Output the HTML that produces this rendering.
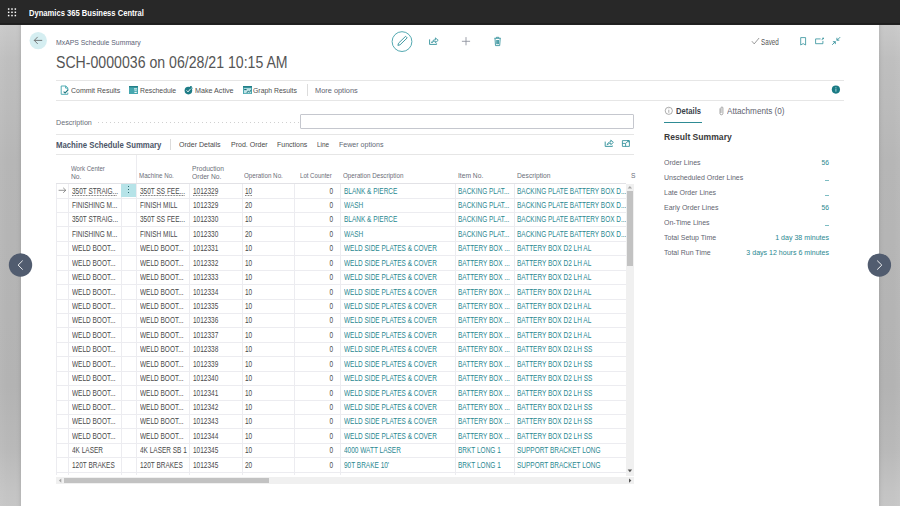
<!DOCTYPE html><html><head><meta charset="utf-8"><style>
*{margin:0;padding:0;box-sizing:border-box}
html,body{width:900px;height:506px;overflow:hidden;background:#fff;font-family:"Liberation Sans",sans-serif}
.a{position:absolute;white-space:nowrap}
.vl{background:#ececf0;width:1px}
</style></head><body><div class="a " style="left:0;top:0;width:900px;height:24.8px;background:linear-gradient(180deg,#282828 0,#282828 22.8px,#1e1e1e 23.4px,#1e1e1e 24.2px,#262626 24.8px)"></div>
<svg class="a" style="left:0;top:0" width="24" height="24" viewBox="0 0 24 24"><rect x="7.90" y="8.30" width="1.5" height="1.5" fill="#fff"/><rect x="7.90" y="11.55" width="1.5" height="1.5" fill="#fff"/><rect x="7.90" y="14.80" width="1.5" height="1.5" fill="#fff"/><rect x="11.25" y="8.30" width="1.5" height="1.5" fill="#fff"/><rect x="11.25" y="11.55" width="1.5" height="1.5" fill="#fff"/><rect x="11.25" y="14.80" width="1.5" height="1.5" fill="#fff"/><rect x="14.60" y="8.30" width="1.5" height="1.5" fill="#fff"/><rect x="14.60" y="11.55" width="1.5" height="1.5" fill="#fff"/><rect x="14.60" y="14.80" width="1.5" height="1.5" fill="#fff"/></svg>
<div class="a " style="left:29.30px;top:9.00px;font-size:8.52px;line-height:8.52px;color:#fff;transform:scaleX(0.892);transform-origin:0 0;font-weight:bold;">Dynamics 365 Business Central</div>
<div class="a " style="left:0;top:24.8px;width:21px;height:482px;background:linear-gradient(270deg,rgba(0,0,0,0.07) 0,rgba(0,0,0,0.05) 1px,rgba(0,0,0,0.01) 3px,rgba(0,0,0,0) 6px,rgba(255,255,255,0) 14px,rgba(255,255,255,0.05) 21px),linear-gradient(180deg,#c9c9c9 0%,#bfbfbf 7%,#b9b9b9 22%,#b6b6b6 28%,#b4b4b4 60%,#b3b3b3 75%,#b9b9b9 88%,#c4c4c4 97%,#c6c6c6 100%)"></div>
<div class="a " style="left:879.4px;top:24.8px;width:20.6px;height:482px;background:linear-gradient(90deg,rgba(0,0,0,0.07) 0,rgba(0,0,0,0.05) 1px,rgba(0,0,0,0.01) 3px,rgba(0,0,0,0) 6px,rgba(255,255,255,0) 14px,rgba(255,255,255,0.05) 21px),linear-gradient(180deg,#c9c9c9 0%,#bfbfbf 7%,#b9b9b9 22%,#b6b6b6 28%,#b4b4b4 60%,#b3b3b3 75%,#b9b9b9 88%,#c4c4c4 97%,#c6c6c6 100%)"></div>
<div class="a " style="left:55.60px;top:39.00px;font-size:7.40px;line-height:7.40px;color:#5a6376;transform:scaleX(0.928);transform-origin:0 0;">MxAPS Schedule Summary</div>
<div class="a " style="left:56.30px;top:54.00px;font-size:16.06px;line-height:16.06px;color:#555555;transform:scaleX(0.880);transform-origin:0 0;">SCH-0000036 on 06/28/21 10:15 AM</div>
<div class="a " style="left:760.80px;top:39.00px;font-size:8.24px;line-height:8.24px;color:#555555;transform:scaleX(0.762);transform-origin:0 0;">Saved</div>
<div class="a " style="left:56px;top:80px;width:787.5px;height:1px;background:#e6e6e6"></div>
<div class="a " style="left:56px;top:99.5px;width:787.5px;height:1px;background:#e6e6e6"></div>
<div class="a " style="left:70.70px;top:87.00px;font-size:7.48px;line-height:7.48px;color:#4f4f4f;transform:scaleX(0.935);transform-origin:0 0;">Commit Results</div>
<div class="a " style="left:139.50px;top:87.00px;font-size:7.48px;line-height:7.48px;color:#4f4f4f;transform:scaleX(0.915);transform-origin:0 0;">Reschedule</div>
<div class="a " style="left:195.00px;top:87.00px;font-size:7.48px;line-height:7.48px;color:#4f4f4f;transform:scaleX(0.958);transform-origin:0 0;">Make Active</div>
<div class="a " style="left:253.40px;top:87.00px;font-size:7.48px;line-height:7.48px;color:#4f4f4f;transform:scaleX(0.921);transform-origin:0 0;">Graph Results</div>
<div class="a " style="left:306.5px;top:84px;width:1px;height:12px;background:#dcdcdc"></div>
<div class="a " style="left:315.30px;top:87.00px;font-size:7.48px;line-height:7.48px;color:#5f6470;transform:scaleX(0.989);transform-origin:0 0;">More options</div>
<div class="a " style="left:55.80px;top:119.00px;font-size:7.40px;line-height:7.40px;color:#6a6e78;transform:scaleX(0.970);transform-origin:0 0;">Description</div>
<div class="a " style="left:97.5px;top:122px;width:202px;height:1px;background-image:linear-gradient(90deg,#d0d0d0 0,#d0d0d0 1px,transparent 1px);background-size:4px 1px"></div>
<div class="a " style="left:300.3px;top:114.3px;width:333.5px;height:14.8px;border:1px solid #c5c7ce;border-radius:1px"></div>
<div class="a " style="left:56px;top:133.7px;width:578px;height:1px;background:#e6e6e6"></div>
<div class="a " style="left:56px;top:153.8px;width:578px;height:1px;background:#e6e6e6"></div>
<div class="a " style="left:55.80px;top:141.00px;font-size:8.52px;line-height:8.52px;color:#4b5567;transform:scaleX(0.913);transform-origin:0 0;font-weight:bold;">Machine Schedule Summary</div>
<div class="a " style="left:170px;top:138.7px;width:1px;height:11px;background:#dcdcdc"></div>
<div class="a " style="left:179.40px;top:141.00px;font-size:7.68px;line-height:7.68px;color:#4a4a4a;transform:scaleX(0.919);transform-origin:0 0;">Order Details</div>
<div class="a " style="left:230.70px;top:141.00px;font-size:7.68px;line-height:7.68px;color:#4a4a4a;transform:scaleX(0.915);transform-origin:0 0;">Prod. Order</div>
<div class="a " style="left:276.70px;top:141.00px;font-size:7.68px;line-height:7.68px;color:#4a4a4a;transform:scaleX(0.910);transform-origin:0 0;">Functions</div>
<div class="a " style="left:316.80px;top:141.00px;font-size:7.68px;line-height:7.68px;color:#4a4a4a;transform:scaleX(0.840);transform-origin:0 0;">Line</div>
<div class="a " style="left:338.80px;top:141.00px;font-size:7.68px;line-height:7.68px;color:#636875;transform:scaleX(0.922);transform-origin:0 0;">Fewer options</div>
<div class="a " style="left:71.10px;top:165.00px;font-size:6.98px;line-height:6.98px;color:#6b6e78;transform:scaleX(0.868);transform-origin:0 0;">Work Center</div>
<div class="a " style="left:71.10px;top:173.00px;font-size:6.98px;line-height:6.98px;color:#6b6e78;transform:scaleX(0.960);transform-origin:0 0;">No.</div>
<div class="a " style="left:139.10px;top:172.00px;font-size:6.98px;line-height:6.98px;color:#6b6e78;transform:scaleX(0.890);transform-origin:0 0;">Machine No.</div>
<div class="a " style="left:191.90px;top:165.00px;font-size:6.98px;line-height:6.98px;color:#6b6e78;transform:scaleX(0.960);transform-origin:0 0;">Production</div>
<div class="a " style="left:191.90px;top:173.00px;font-size:6.98px;line-height:6.98px;color:#6b6e78;transform:scaleX(0.960);transform-origin:0 0;">Order No.</div>
<div class="a " style="left:244.40px;top:172.00px;font-size:6.98px;line-height:6.98px;color:#6b6e78;transform:scaleX(0.895);transform-origin:0 0;">Operation No.</div>
<div class="a " style="left:300.00px;top:172.00px;font-size:6.98px;line-height:6.98px;color:#6b6e78;transform:scaleX(0.871);transform-origin:0 0;">Lot Counter</div>
<div class="a " style="left:343.30px;top:172.00px;font-size:6.98px;line-height:6.98px;color:#6b6e78;transform:scaleX(0.896);transform-origin:0 0;">Operation Description</div>
<div class="a " style="left:457.80px;top:172.00px;font-size:6.98px;line-height:6.98px;color:#6b6e78;transform:scaleX(0.960);transform-origin:0 0;">Item No.</div>
<div class="a " style="left:516.90px;top:172.00px;font-size:6.98px;line-height:6.98px;color:#6b6e78;transform:scaleX(0.960);transform-origin:0 0;">Description</div>
<div class="a " style="left:630.80px;top:172.00px;font-size:6.98px;line-height:6.98px;color:#6b6e78;transform:scaleX(0.960);transform-origin:0 0;">S</div>
<div class="a vl" style="left:136.4px;top:154.8px;height:28.4px"></div>
<div class="a " style="left:56px;top:183px;width:570px;height:1px;background:#e2e2e6"></div>
<div class="a vl" style="left:56.0px;top:183.5px;height:291.8px"></div>
<div class="a vl" style="left:68.4px;top:183.5px;height:291.8px"></div>
<div class="a vl" style="left:120.6px;top:183.5px;height:291.8px"></div>
<div class="a vl" style="left:136.4px;top:183.5px;height:291.8px"></div>
<div class="a vl" style="left:189.0px;top:183.5px;height:291.8px"></div>
<div class="a vl" style="left:241.8px;top:183.5px;height:291.8px"></div>
<div class="a vl" style="left:294.4px;top:183.5px;height:291.8px"></div>
<div class="a vl" style="left:340.4px;top:183.5px;height:291.8px"></div>
<div class="a vl" style="left:454.7px;top:183.5px;height:291.8px"></div>
<div class="a vl" style="left:513.6px;top:183.5px;height:291.8px"></div>
<div class="a " style="left:56px;top:197.62px;width:570px;height:1px;background:#ececf0"></div>
<div class="a " style="left:56px;top:212.05px;width:570px;height:1px;background:#ececf0"></div>
<div class="a " style="left:56px;top:226.47px;width:570px;height:1px;background:#ececf0"></div>
<div class="a " style="left:56px;top:240.90px;width:570px;height:1px;background:#ececf0"></div>
<div class="a " style="left:56px;top:255.32px;width:570px;height:1px;background:#ececf0"></div>
<div class="a " style="left:56px;top:269.75px;width:570px;height:1px;background:#ececf0"></div>
<div class="a " style="left:56px;top:284.18px;width:570px;height:1px;background:#ececf0"></div>
<div class="a " style="left:56px;top:298.60px;width:570px;height:1px;background:#ececf0"></div>
<div class="a " style="left:56px;top:313.02px;width:570px;height:1px;background:#ececf0"></div>
<div class="a " style="left:56px;top:327.45px;width:570px;height:1px;background:#ececf0"></div>
<div class="a " style="left:56px;top:341.88px;width:570px;height:1px;background:#ececf0"></div>
<div class="a " style="left:56px;top:356.30px;width:570px;height:1px;background:#ececf0"></div>
<div class="a " style="left:56px;top:370.73px;width:570px;height:1px;background:#ececf0"></div>
<div class="a " style="left:56px;top:385.15px;width:570px;height:1px;background:#ececf0"></div>
<div class="a " style="left:56px;top:399.57px;width:570px;height:1px;background:#ececf0"></div>
<div class="a " style="left:56px;top:414.00px;width:570px;height:1px;background:#ececf0"></div>
<div class="a " style="left:56px;top:428.43px;width:570px;height:1px;background:#ececf0"></div>
<div class="a " style="left:56px;top:442.85px;width:570px;height:1px;background:#ececf0"></div>
<div class="a " style="left:56px;top:457.27px;width:570px;height:1px;background:#ececf0"></div>
<div class="a " style="left:56px;top:471.70px;width:570px;height:1px;background:#ececf0"></div>
<div class="a " style="left:120.8px;top:183.7px;width:15.6px;height:13.7px;background:#b6e3e8"></div>
<div class="a " style="left:128px;top:186.3px;width:1.1px;height:1.1px;background:#2c6b72;box-shadow:0 3px 0 #2c6b72,0 6px 0 #2c6b72"></div>
<div class="a " style="left:72.00px;top:187.00px;font-size:8.32px;line-height:8.32px;color:#4a4a4a;transform:scaleX(0.780);transform-origin:0 0;text-decoration:underline dotted #666;text-underline-offset:0.5px;">350T STRAIG...</div>
<div class="a " style="left:139.80px;top:187.00px;font-size:8.32px;line-height:8.32px;color:#4a4a4a;transform:scaleX(0.780);transform-origin:0 0;text-decoration:underline dotted #666;text-underline-offset:0.5px;">350T SS FEE...</div>
<div class="a " style="left:192.80px;top:187.00px;font-size:8.32px;line-height:8.32px;color:#4a4a4a;transform:scaleX(0.780);transform-origin:0 0;text-decoration:underline dotted #666;text-underline-offset:0.5px;">1012329</div>
<div class="a " style="left:245.00px;top:187.00px;font-size:8.32px;line-height:8.32px;color:#4a4a4a;transform:scaleX(0.780);transform-origin:0 0;text-decoration:underline dotted #666;text-underline-offset:0.5px;">10</div>
<div class="a " style="left:132.90px;top:187.00px;width:200.00px;text-align:right;font-size:8.32px;line-height:8.32px;color:#4a4a4a;transform:scaleX(0.780);transform-origin:100% 0;">0</div>
<div class="a " style="left:343.80px;top:187.00px;font-size:8.32px;line-height:8.32px;color:#2a8891;transform:scaleX(0.780);transform-origin:0 0;">BLANK &amp; PIERCE</div>
<div class="a " style="left:458.00px;top:187.00px;font-size:8.32px;line-height:8.32px;color:#2a8891;transform:scaleX(0.780);transform-origin:0 0;">BACKING PLAT...</div>
<div class="a " style="left:517.00px;top:187.00px;font-size:8.32px;line-height:8.32px;color:#2a8891;transform:scaleX(0.780);transform-origin:0 0;">BACKING PLATE BATTERY BOX D...</div>
<div class="a " style="left:72.00px;top:201.00px;font-size:8.32px;line-height:8.32px;color:#4a4a4a;transform:scaleX(0.780);transform-origin:0 0;">FINISHING M...</div>
<div class="a " style="left:139.80px;top:201.00px;font-size:8.32px;line-height:8.32px;color:#4a4a4a;transform:scaleX(0.780);transform-origin:0 0;">FINISH MILL</div>
<div class="a " style="left:192.80px;top:201.00px;font-size:8.32px;line-height:8.32px;color:#4a4a4a;transform:scaleX(0.780);transform-origin:0 0;">1012329</div>
<div class="a " style="left:245.00px;top:201.00px;font-size:8.32px;line-height:8.32px;color:#4a4a4a;transform:scaleX(0.780);transform-origin:0 0;">20</div>
<div class="a " style="left:132.90px;top:201.00px;width:200.00px;text-align:right;font-size:8.32px;line-height:8.32px;color:#4a4a4a;transform:scaleX(0.780);transform-origin:100% 0;">0</div>
<div class="a " style="left:343.80px;top:201.00px;font-size:8.32px;line-height:8.32px;color:#2a8891;transform:scaleX(0.780);transform-origin:0 0;">WASH</div>
<div class="a " style="left:458.00px;top:201.00px;font-size:8.32px;line-height:8.32px;color:#2a8891;transform:scaleX(0.780);transform-origin:0 0;">BACKING PLAT...</div>
<div class="a " style="left:517.00px;top:201.00px;font-size:8.32px;line-height:8.32px;color:#2a8891;transform:scaleX(0.780);transform-origin:0 0;">BACKING PLATE BATTERY BOX D...</div>
<div class="a " style="left:72.00px;top:215.00px;font-size:8.32px;line-height:8.32px;color:#4a4a4a;transform:scaleX(0.780);transform-origin:0 0;">350T STRAIG...</div>
<div class="a " style="left:139.80px;top:215.00px;font-size:8.32px;line-height:8.32px;color:#4a4a4a;transform:scaleX(0.780);transform-origin:0 0;">350T SS FEE...</div>
<div class="a " style="left:192.80px;top:215.00px;font-size:8.32px;line-height:8.32px;color:#4a4a4a;transform:scaleX(0.780);transform-origin:0 0;">1012330</div>
<div class="a " style="left:245.00px;top:215.00px;font-size:8.32px;line-height:8.32px;color:#4a4a4a;transform:scaleX(0.780);transform-origin:0 0;">10</div>
<div class="a " style="left:132.90px;top:215.00px;width:200.00px;text-align:right;font-size:8.32px;line-height:8.32px;color:#4a4a4a;transform:scaleX(0.780);transform-origin:100% 0;">0</div>
<div class="a " style="left:343.80px;top:215.00px;font-size:8.32px;line-height:8.32px;color:#2a8891;transform:scaleX(0.780);transform-origin:0 0;">BLANK &amp; PIERCE</div>
<div class="a " style="left:458.00px;top:215.00px;font-size:8.32px;line-height:8.32px;color:#2a8891;transform:scaleX(0.780);transform-origin:0 0;">BACKING PLAT...</div>
<div class="a " style="left:517.00px;top:215.00px;font-size:8.32px;line-height:8.32px;color:#2a8891;transform:scaleX(0.780);transform-origin:0 0;">BACKING PLATE BATTERY BOX D...</div>
<div class="a " style="left:72.00px;top:230.00px;font-size:8.32px;line-height:8.32px;color:#4a4a4a;transform:scaleX(0.780);transform-origin:0 0;">FINISHING M...</div>
<div class="a " style="left:139.80px;top:230.00px;font-size:8.32px;line-height:8.32px;color:#4a4a4a;transform:scaleX(0.780);transform-origin:0 0;">FINISH MILL</div>
<div class="a " style="left:192.80px;top:230.00px;font-size:8.32px;line-height:8.32px;color:#4a4a4a;transform:scaleX(0.780);transform-origin:0 0;">1012330</div>
<div class="a " style="left:245.00px;top:230.00px;font-size:8.32px;line-height:8.32px;color:#4a4a4a;transform:scaleX(0.780);transform-origin:0 0;">20</div>
<div class="a " style="left:132.90px;top:230.00px;width:200.00px;text-align:right;font-size:8.32px;line-height:8.32px;color:#4a4a4a;transform:scaleX(0.780);transform-origin:100% 0;">0</div>
<div class="a " style="left:343.80px;top:230.00px;font-size:8.32px;line-height:8.32px;color:#2a8891;transform:scaleX(0.780);transform-origin:0 0;">WASH</div>
<div class="a " style="left:458.00px;top:230.00px;font-size:8.32px;line-height:8.32px;color:#2a8891;transform:scaleX(0.780);transform-origin:0 0;">BACKING PLAT...</div>
<div class="a " style="left:517.00px;top:230.00px;font-size:8.32px;line-height:8.32px;color:#2a8891;transform:scaleX(0.780);transform-origin:0 0;">BACKING PLATE BATTERY BOX D...</div>
<div class="a " style="left:72.00px;top:244.00px;font-size:8.32px;line-height:8.32px;color:#4a4a4a;transform:scaleX(0.780);transform-origin:0 0;">WELD BOOT...</div>
<div class="a " style="left:139.80px;top:244.00px;font-size:8.32px;line-height:8.32px;color:#4a4a4a;transform:scaleX(0.780);transform-origin:0 0;">WELD BOOT...</div>
<div class="a " style="left:192.80px;top:244.00px;font-size:8.32px;line-height:8.32px;color:#4a4a4a;transform:scaleX(0.780);transform-origin:0 0;">1012331</div>
<div class="a " style="left:245.00px;top:244.00px;font-size:8.32px;line-height:8.32px;color:#4a4a4a;transform:scaleX(0.780);transform-origin:0 0;">10</div>
<div class="a " style="left:132.90px;top:244.00px;width:200.00px;text-align:right;font-size:8.32px;line-height:8.32px;color:#4a4a4a;transform:scaleX(0.780);transform-origin:100% 0;">0</div>
<div class="a " style="left:343.80px;top:244.00px;font-size:8.32px;line-height:8.32px;color:#2a8891;transform:scaleX(0.780);transform-origin:0 0;">WELD SIDE PLATES &amp; COVER</div>
<div class="a " style="left:458.00px;top:244.00px;font-size:8.32px;line-height:8.32px;color:#2a8891;transform:scaleX(0.780);transform-origin:0 0;">BATTERY BOX ...</div>
<div class="a " style="left:517.00px;top:244.00px;font-size:8.32px;line-height:8.32px;color:#2a8891;transform:scaleX(0.780);transform-origin:0 0;">BATTERY BOX D2 LH AL</div>
<div class="a " style="left:72.00px;top:259.00px;font-size:8.32px;line-height:8.32px;color:#4a4a4a;transform:scaleX(0.780);transform-origin:0 0;">WELD BOOT...</div>
<div class="a " style="left:139.80px;top:259.00px;font-size:8.32px;line-height:8.32px;color:#4a4a4a;transform:scaleX(0.780);transform-origin:0 0;">WELD BOOT...</div>
<div class="a " style="left:192.80px;top:259.00px;font-size:8.32px;line-height:8.32px;color:#4a4a4a;transform:scaleX(0.780);transform-origin:0 0;">1012332</div>
<div class="a " style="left:245.00px;top:259.00px;font-size:8.32px;line-height:8.32px;color:#4a4a4a;transform:scaleX(0.780);transform-origin:0 0;">10</div>
<div class="a " style="left:132.90px;top:259.00px;width:200.00px;text-align:right;font-size:8.32px;line-height:8.32px;color:#4a4a4a;transform:scaleX(0.780);transform-origin:100% 0;">0</div>
<div class="a " style="left:343.80px;top:259.00px;font-size:8.32px;line-height:8.32px;color:#2a8891;transform:scaleX(0.780);transform-origin:0 0;">WELD SIDE PLATES &amp; COVER</div>
<div class="a " style="left:458.00px;top:259.00px;font-size:8.32px;line-height:8.32px;color:#2a8891;transform:scaleX(0.780);transform-origin:0 0;">BATTERY BOX ...</div>
<div class="a " style="left:517.00px;top:259.00px;font-size:8.32px;line-height:8.32px;color:#2a8891;transform:scaleX(0.780);transform-origin:0 0;">BATTERY BOX D2 LH AL</div>
<div class="a " style="left:72.00px;top:273.00px;font-size:8.32px;line-height:8.32px;color:#4a4a4a;transform:scaleX(0.780);transform-origin:0 0;">WELD BOOT...</div>
<div class="a " style="left:139.80px;top:273.00px;font-size:8.32px;line-height:8.32px;color:#4a4a4a;transform:scaleX(0.780);transform-origin:0 0;">WELD BOOT...</div>
<div class="a " style="left:192.80px;top:273.00px;font-size:8.32px;line-height:8.32px;color:#4a4a4a;transform:scaleX(0.780);transform-origin:0 0;">1012333</div>
<div class="a " style="left:245.00px;top:273.00px;font-size:8.32px;line-height:8.32px;color:#4a4a4a;transform:scaleX(0.780);transform-origin:0 0;">10</div>
<div class="a " style="left:132.90px;top:273.00px;width:200.00px;text-align:right;font-size:8.32px;line-height:8.32px;color:#4a4a4a;transform:scaleX(0.780);transform-origin:100% 0;">0</div>
<div class="a " style="left:343.80px;top:273.00px;font-size:8.32px;line-height:8.32px;color:#2a8891;transform:scaleX(0.780);transform-origin:0 0;">WELD SIDE PLATES &amp; COVER</div>
<div class="a " style="left:458.00px;top:273.00px;font-size:8.32px;line-height:8.32px;color:#2a8891;transform:scaleX(0.780);transform-origin:0 0;">BATTERY BOX ...</div>
<div class="a " style="left:517.00px;top:273.00px;font-size:8.32px;line-height:8.32px;color:#2a8891;transform:scaleX(0.780);transform-origin:0 0;">BATTERY BOX D2 LH AL</div>
<div class="a " style="left:72.00px;top:288.00px;font-size:8.32px;line-height:8.32px;color:#4a4a4a;transform:scaleX(0.780);transform-origin:0 0;">WELD BOOT...</div>
<div class="a " style="left:139.80px;top:288.00px;font-size:8.32px;line-height:8.32px;color:#4a4a4a;transform:scaleX(0.780);transform-origin:0 0;">WELD BOOT...</div>
<div class="a " style="left:192.80px;top:288.00px;font-size:8.32px;line-height:8.32px;color:#4a4a4a;transform:scaleX(0.780);transform-origin:0 0;">1012334</div>
<div class="a " style="left:245.00px;top:288.00px;font-size:8.32px;line-height:8.32px;color:#4a4a4a;transform:scaleX(0.780);transform-origin:0 0;">10</div>
<div class="a " style="left:132.90px;top:288.00px;width:200.00px;text-align:right;font-size:8.32px;line-height:8.32px;color:#4a4a4a;transform:scaleX(0.780);transform-origin:100% 0;">0</div>
<div class="a " style="left:343.80px;top:288.00px;font-size:8.32px;line-height:8.32px;color:#2a8891;transform:scaleX(0.780);transform-origin:0 0;">WELD SIDE PLATES &amp; COVER</div>
<div class="a " style="left:458.00px;top:288.00px;font-size:8.32px;line-height:8.32px;color:#2a8891;transform:scaleX(0.780);transform-origin:0 0;">BATTERY BOX ...</div>
<div class="a " style="left:517.00px;top:288.00px;font-size:8.32px;line-height:8.32px;color:#2a8891;transform:scaleX(0.780);transform-origin:0 0;">BATTERY BOX D2 LH AL</div>
<div class="a " style="left:72.00px;top:302.00px;font-size:8.32px;line-height:8.32px;color:#4a4a4a;transform:scaleX(0.780);transform-origin:0 0;">WELD BOOT...</div>
<div class="a " style="left:139.80px;top:302.00px;font-size:8.32px;line-height:8.32px;color:#4a4a4a;transform:scaleX(0.780);transform-origin:0 0;">WELD BOOT...</div>
<div class="a " style="left:192.80px;top:302.00px;font-size:8.32px;line-height:8.32px;color:#4a4a4a;transform:scaleX(0.780);transform-origin:0 0;">1012335</div>
<div class="a " style="left:245.00px;top:302.00px;font-size:8.32px;line-height:8.32px;color:#4a4a4a;transform:scaleX(0.780);transform-origin:0 0;">10</div>
<div class="a " style="left:132.90px;top:302.00px;width:200.00px;text-align:right;font-size:8.32px;line-height:8.32px;color:#4a4a4a;transform:scaleX(0.780);transform-origin:100% 0;">0</div>
<div class="a " style="left:343.80px;top:302.00px;font-size:8.32px;line-height:8.32px;color:#2a8891;transform:scaleX(0.780);transform-origin:0 0;">WELD SIDE PLATES &amp; COVER</div>
<div class="a " style="left:458.00px;top:302.00px;font-size:8.32px;line-height:8.32px;color:#2a8891;transform:scaleX(0.780);transform-origin:0 0;">BATTERY BOX ...</div>
<div class="a " style="left:517.00px;top:302.00px;font-size:8.32px;line-height:8.32px;color:#2a8891;transform:scaleX(0.780);transform-origin:0 0;">BATTERY BOX D2 LH AL</div>
<div class="a " style="left:72.00px;top:316.00px;font-size:8.32px;line-height:8.32px;color:#4a4a4a;transform:scaleX(0.780);transform-origin:0 0;">WELD BOOT...</div>
<div class="a " style="left:139.80px;top:316.00px;font-size:8.32px;line-height:8.32px;color:#4a4a4a;transform:scaleX(0.780);transform-origin:0 0;">WELD BOOT...</div>
<div class="a " style="left:192.80px;top:316.00px;font-size:8.32px;line-height:8.32px;color:#4a4a4a;transform:scaleX(0.780);transform-origin:0 0;">1012336</div>
<div class="a " style="left:245.00px;top:316.00px;font-size:8.32px;line-height:8.32px;color:#4a4a4a;transform:scaleX(0.780);transform-origin:0 0;">10</div>
<div class="a " style="left:132.90px;top:316.00px;width:200.00px;text-align:right;font-size:8.32px;line-height:8.32px;color:#4a4a4a;transform:scaleX(0.780);transform-origin:100% 0;">0</div>
<div class="a " style="left:343.80px;top:316.00px;font-size:8.32px;line-height:8.32px;color:#2a8891;transform:scaleX(0.780);transform-origin:0 0;">WELD SIDE PLATES &amp; COVER</div>
<div class="a " style="left:458.00px;top:316.00px;font-size:8.32px;line-height:8.32px;color:#2a8891;transform:scaleX(0.780);transform-origin:0 0;">BATTERY BOX ...</div>
<div class="a " style="left:517.00px;top:316.00px;font-size:8.32px;line-height:8.32px;color:#2a8891;transform:scaleX(0.780);transform-origin:0 0;">BATTERY BOX D2 LH AL</div>
<div class="a " style="left:72.00px;top:331.00px;font-size:8.32px;line-height:8.32px;color:#4a4a4a;transform:scaleX(0.780);transform-origin:0 0;">WELD BOOT...</div>
<div class="a " style="left:139.80px;top:331.00px;font-size:8.32px;line-height:8.32px;color:#4a4a4a;transform:scaleX(0.780);transform-origin:0 0;">WELD BOOT...</div>
<div class="a " style="left:192.80px;top:331.00px;font-size:8.32px;line-height:8.32px;color:#4a4a4a;transform:scaleX(0.780);transform-origin:0 0;">1012337</div>
<div class="a " style="left:245.00px;top:331.00px;font-size:8.32px;line-height:8.32px;color:#4a4a4a;transform:scaleX(0.780);transform-origin:0 0;">10</div>
<div class="a " style="left:132.90px;top:331.00px;width:200.00px;text-align:right;font-size:8.32px;line-height:8.32px;color:#4a4a4a;transform:scaleX(0.780);transform-origin:100% 0;">0</div>
<div class="a " style="left:343.80px;top:331.00px;font-size:8.32px;line-height:8.32px;color:#2a8891;transform:scaleX(0.780);transform-origin:0 0;">WELD SIDE PLATES &amp; COVER</div>
<div class="a " style="left:458.00px;top:331.00px;font-size:8.32px;line-height:8.32px;color:#2a8891;transform:scaleX(0.780);transform-origin:0 0;">BATTERY BOX ...</div>
<div class="a " style="left:517.00px;top:331.00px;font-size:8.32px;line-height:8.32px;color:#2a8891;transform:scaleX(0.780);transform-origin:0 0;">BATTERY BOX D2 LH AL</div>
<div class="a " style="left:72.00px;top:345.00px;font-size:8.32px;line-height:8.32px;color:#4a4a4a;transform:scaleX(0.780);transform-origin:0 0;">WELD BOOT...</div>
<div class="a " style="left:139.80px;top:345.00px;font-size:8.32px;line-height:8.32px;color:#4a4a4a;transform:scaleX(0.780);transform-origin:0 0;">WELD BOOT...</div>
<div class="a " style="left:192.80px;top:345.00px;font-size:8.32px;line-height:8.32px;color:#4a4a4a;transform:scaleX(0.780);transform-origin:0 0;">1012338</div>
<div class="a " style="left:245.00px;top:345.00px;font-size:8.32px;line-height:8.32px;color:#4a4a4a;transform:scaleX(0.780);transform-origin:0 0;">10</div>
<div class="a " style="left:132.90px;top:345.00px;width:200.00px;text-align:right;font-size:8.32px;line-height:8.32px;color:#4a4a4a;transform:scaleX(0.780);transform-origin:100% 0;">0</div>
<div class="a " style="left:343.80px;top:345.00px;font-size:8.32px;line-height:8.32px;color:#2a8891;transform:scaleX(0.780);transform-origin:0 0;">WELD SIDE PLATES &amp; COVER</div>
<div class="a " style="left:458.00px;top:345.00px;font-size:8.32px;line-height:8.32px;color:#2a8891;transform:scaleX(0.780);transform-origin:0 0;">BATTERY BOX ...</div>
<div class="a " style="left:517.00px;top:345.00px;font-size:8.32px;line-height:8.32px;color:#2a8891;transform:scaleX(0.780);transform-origin:0 0;">BATTERY BOX D2 LH SS</div>
<div class="a " style="left:72.00px;top:360.00px;font-size:8.32px;line-height:8.32px;color:#4a4a4a;transform:scaleX(0.780);transform-origin:0 0;">WELD BOOT...</div>
<div class="a " style="left:139.80px;top:360.00px;font-size:8.32px;line-height:8.32px;color:#4a4a4a;transform:scaleX(0.780);transform-origin:0 0;">WELD BOOT...</div>
<div class="a " style="left:192.80px;top:360.00px;font-size:8.32px;line-height:8.32px;color:#4a4a4a;transform:scaleX(0.780);transform-origin:0 0;">1012339</div>
<div class="a " style="left:245.00px;top:360.00px;font-size:8.32px;line-height:8.32px;color:#4a4a4a;transform:scaleX(0.780);transform-origin:0 0;">10</div>
<div class="a " style="left:132.90px;top:360.00px;width:200.00px;text-align:right;font-size:8.32px;line-height:8.32px;color:#4a4a4a;transform:scaleX(0.780);transform-origin:100% 0;">0</div>
<div class="a " style="left:343.80px;top:360.00px;font-size:8.32px;line-height:8.32px;color:#2a8891;transform:scaleX(0.780);transform-origin:0 0;">WELD SIDE PLATES &amp; COVER</div>
<div class="a " style="left:458.00px;top:360.00px;font-size:8.32px;line-height:8.32px;color:#2a8891;transform:scaleX(0.780);transform-origin:0 0;">BATTERY BOX ...</div>
<div class="a " style="left:517.00px;top:360.00px;font-size:8.32px;line-height:8.32px;color:#2a8891;transform:scaleX(0.780);transform-origin:0 0;">BATTERY BOX D2 LH SS</div>
<div class="a " style="left:72.00px;top:374.00px;font-size:8.32px;line-height:8.32px;color:#4a4a4a;transform:scaleX(0.780);transform-origin:0 0;">WELD BOOT...</div>
<div class="a " style="left:139.80px;top:374.00px;font-size:8.32px;line-height:8.32px;color:#4a4a4a;transform:scaleX(0.780);transform-origin:0 0;">WELD BOOT...</div>
<div class="a " style="left:192.80px;top:374.00px;font-size:8.32px;line-height:8.32px;color:#4a4a4a;transform:scaleX(0.780);transform-origin:0 0;">1012340</div>
<div class="a " style="left:245.00px;top:374.00px;font-size:8.32px;line-height:8.32px;color:#4a4a4a;transform:scaleX(0.780);transform-origin:0 0;">10</div>
<div class="a " style="left:132.90px;top:374.00px;width:200.00px;text-align:right;font-size:8.32px;line-height:8.32px;color:#4a4a4a;transform:scaleX(0.780);transform-origin:100% 0;">0</div>
<div class="a " style="left:343.80px;top:374.00px;font-size:8.32px;line-height:8.32px;color:#2a8891;transform:scaleX(0.780);transform-origin:0 0;">WELD SIDE PLATES &amp; COVER</div>
<div class="a " style="left:458.00px;top:374.00px;font-size:8.32px;line-height:8.32px;color:#2a8891;transform:scaleX(0.780);transform-origin:0 0;">BATTERY BOX ...</div>
<div class="a " style="left:517.00px;top:374.00px;font-size:8.32px;line-height:8.32px;color:#2a8891;transform:scaleX(0.780);transform-origin:0 0;">BATTERY BOX D2 LH SS</div>
<div class="a " style="left:72.00px;top:389.00px;font-size:8.32px;line-height:8.32px;color:#4a4a4a;transform:scaleX(0.780);transform-origin:0 0;">WELD BOOT...</div>
<div class="a " style="left:139.80px;top:389.00px;font-size:8.32px;line-height:8.32px;color:#4a4a4a;transform:scaleX(0.780);transform-origin:0 0;">WELD BOOT...</div>
<div class="a " style="left:192.80px;top:389.00px;font-size:8.32px;line-height:8.32px;color:#4a4a4a;transform:scaleX(0.780);transform-origin:0 0;">1012341</div>
<div class="a " style="left:245.00px;top:389.00px;font-size:8.32px;line-height:8.32px;color:#4a4a4a;transform:scaleX(0.780);transform-origin:0 0;">10</div>
<div class="a " style="left:132.90px;top:389.00px;width:200.00px;text-align:right;font-size:8.32px;line-height:8.32px;color:#4a4a4a;transform:scaleX(0.780);transform-origin:100% 0;">0</div>
<div class="a " style="left:343.80px;top:389.00px;font-size:8.32px;line-height:8.32px;color:#2a8891;transform:scaleX(0.780);transform-origin:0 0;">WELD SIDE PLATES &amp; COVER</div>
<div class="a " style="left:458.00px;top:389.00px;font-size:8.32px;line-height:8.32px;color:#2a8891;transform:scaleX(0.780);transform-origin:0 0;">BATTERY BOX ...</div>
<div class="a " style="left:517.00px;top:389.00px;font-size:8.32px;line-height:8.32px;color:#2a8891;transform:scaleX(0.780);transform-origin:0 0;">BATTERY BOX D2 LH SS</div>
<div class="a " style="left:72.00px;top:403.00px;font-size:8.32px;line-height:8.32px;color:#4a4a4a;transform:scaleX(0.780);transform-origin:0 0;">WELD BOOT...</div>
<div class="a " style="left:139.80px;top:403.00px;font-size:8.32px;line-height:8.32px;color:#4a4a4a;transform:scaleX(0.780);transform-origin:0 0;">WELD BOOT...</div>
<div class="a " style="left:192.80px;top:403.00px;font-size:8.32px;line-height:8.32px;color:#4a4a4a;transform:scaleX(0.780);transform-origin:0 0;">1012342</div>
<div class="a " style="left:245.00px;top:403.00px;font-size:8.32px;line-height:8.32px;color:#4a4a4a;transform:scaleX(0.780);transform-origin:0 0;">10</div>
<div class="a " style="left:132.90px;top:403.00px;width:200.00px;text-align:right;font-size:8.32px;line-height:8.32px;color:#4a4a4a;transform:scaleX(0.780);transform-origin:100% 0;">0</div>
<div class="a " style="left:343.80px;top:403.00px;font-size:8.32px;line-height:8.32px;color:#2a8891;transform:scaleX(0.780);transform-origin:0 0;">WELD SIDE PLATES &amp; COVER</div>
<div class="a " style="left:458.00px;top:403.00px;font-size:8.32px;line-height:8.32px;color:#2a8891;transform:scaleX(0.780);transform-origin:0 0;">BATTERY BOX ...</div>
<div class="a " style="left:517.00px;top:403.00px;font-size:8.32px;line-height:8.32px;color:#2a8891;transform:scaleX(0.780);transform-origin:0 0;">BATTERY BOX D2 LH SS</div>
<div class="a " style="left:72.00px;top:417.00px;font-size:8.32px;line-height:8.32px;color:#4a4a4a;transform:scaleX(0.780);transform-origin:0 0;">WELD BOOT...</div>
<div class="a " style="left:139.80px;top:417.00px;font-size:8.32px;line-height:8.32px;color:#4a4a4a;transform:scaleX(0.780);transform-origin:0 0;">WELD BOOT...</div>
<div class="a " style="left:192.80px;top:417.00px;font-size:8.32px;line-height:8.32px;color:#4a4a4a;transform:scaleX(0.780);transform-origin:0 0;">1012343</div>
<div class="a " style="left:245.00px;top:417.00px;font-size:8.32px;line-height:8.32px;color:#4a4a4a;transform:scaleX(0.780);transform-origin:0 0;">10</div>
<div class="a " style="left:132.90px;top:417.00px;width:200.00px;text-align:right;font-size:8.32px;line-height:8.32px;color:#4a4a4a;transform:scaleX(0.780);transform-origin:100% 0;">0</div>
<div class="a " style="left:343.80px;top:417.00px;font-size:8.32px;line-height:8.32px;color:#2a8891;transform:scaleX(0.780);transform-origin:0 0;">WELD SIDE PLATES &amp; COVER</div>
<div class="a " style="left:458.00px;top:417.00px;font-size:8.32px;line-height:8.32px;color:#2a8891;transform:scaleX(0.780);transform-origin:0 0;">BATTERY BOX ...</div>
<div class="a " style="left:517.00px;top:417.00px;font-size:8.32px;line-height:8.32px;color:#2a8891;transform:scaleX(0.780);transform-origin:0 0;">BATTERY BOX D2 LH SS</div>
<div class="a " style="left:72.00px;top:432.00px;font-size:8.32px;line-height:8.32px;color:#4a4a4a;transform:scaleX(0.780);transform-origin:0 0;">WELD BOOT...</div>
<div class="a " style="left:139.80px;top:432.00px;font-size:8.32px;line-height:8.32px;color:#4a4a4a;transform:scaleX(0.780);transform-origin:0 0;">WELD BOOT...</div>
<div class="a " style="left:192.80px;top:432.00px;font-size:8.32px;line-height:8.32px;color:#4a4a4a;transform:scaleX(0.780);transform-origin:0 0;">1012344</div>
<div class="a " style="left:245.00px;top:432.00px;font-size:8.32px;line-height:8.32px;color:#4a4a4a;transform:scaleX(0.780);transform-origin:0 0;">10</div>
<div class="a " style="left:132.90px;top:432.00px;width:200.00px;text-align:right;font-size:8.32px;line-height:8.32px;color:#4a4a4a;transform:scaleX(0.780);transform-origin:100% 0;">0</div>
<div class="a " style="left:343.80px;top:432.00px;font-size:8.32px;line-height:8.32px;color:#2a8891;transform:scaleX(0.780);transform-origin:0 0;">WELD SIDE PLATES &amp; COVER</div>
<div class="a " style="left:458.00px;top:432.00px;font-size:8.32px;line-height:8.32px;color:#2a8891;transform:scaleX(0.780);transform-origin:0 0;">BATTERY BOX ...</div>
<div class="a " style="left:517.00px;top:432.00px;font-size:8.32px;line-height:8.32px;color:#2a8891;transform:scaleX(0.780);transform-origin:0 0;">BATTERY BOX D2 LH SS</div>
<div class="a " style="left:72.00px;top:446.00px;font-size:8.32px;line-height:8.32px;color:#4a4a4a;transform:scaleX(0.780);transform-origin:0 0;">4K LASER</div>
<div class="a " style="left:139.80px;top:446.00px;font-size:8.32px;line-height:8.32px;color:#4a4a4a;transform:scaleX(0.780);transform-origin:0 0;">4K LASER SB 1</div>
<div class="a " style="left:192.80px;top:446.00px;font-size:8.32px;line-height:8.32px;color:#4a4a4a;transform:scaleX(0.780);transform-origin:0 0;">1012345</div>
<div class="a " style="left:245.00px;top:446.00px;font-size:8.32px;line-height:8.32px;color:#4a4a4a;transform:scaleX(0.780);transform-origin:0 0;">10</div>
<div class="a " style="left:132.90px;top:446.00px;width:200.00px;text-align:right;font-size:8.32px;line-height:8.32px;color:#4a4a4a;transform:scaleX(0.780);transform-origin:100% 0;">0</div>
<div class="a " style="left:343.80px;top:446.00px;font-size:8.32px;line-height:8.32px;color:#2a8891;transform:scaleX(0.780);transform-origin:0 0;">4000 WATT LASER</div>
<div class="a " style="left:458.00px;top:446.00px;font-size:8.32px;line-height:8.32px;color:#2a8891;transform:scaleX(0.780);transform-origin:0 0;">BRKT LONG 1</div>
<div class="a " style="left:517.00px;top:446.00px;font-size:8.32px;line-height:8.32px;color:#2a8891;transform:scaleX(0.780);transform-origin:0 0;">SUPPORT BRACKET LONG</div>
<div class="a " style="left:72.00px;top:461.00px;font-size:8.32px;line-height:8.32px;color:#4a4a4a;transform:scaleX(0.780);transform-origin:0 0;">120T BRAKES</div>
<div class="a " style="left:139.80px;top:461.00px;font-size:8.32px;line-height:8.32px;color:#4a4a4a;transform:scaleX(0.780);transform-origin:0 0;">120T BRAKES</div>
<div class="a " style="left:192.80px;top:461.00px;font-size:8.32px;line-height:8.32px;color:#4a4a4a;transform:scaleX(0.780);transform-origin:0 0;">1012345</div>
<div class="a " style="left:245.00px;top:461.00px;font-size:8.32px;line-height:8.32px;color:#4a4a4a;transform:scaleX(0.780);transform-origin:0 0;">20</div>
<div class="a " style="left:132.90px;top:461.00px;width:200.00px;text-align:right;font-size:8.32px;line-height:8.32px;color:#4a4a4a;transform:scaleX(0.780);transform-origin:100% 0;">0</div>
<div class="a " style="left:343.80px;top:461.00px;font-size:8.32px;line-height:8.32px;color:#2a8891;transform:scaleX(0.780);transform-origin:0 0;">90T BRAKE 10'</div>
<div class="a " style="left:458.00px;top:461.00px;font-size:8.32px;line-height:8.32px;color:#2a8891;transform:scaleX(0.780);transform-origin:0 0;">BRKT LONG 1</div>
<div class="a " style="left:517.00px;top:461.00px;font-size:8.32px;line-height:8.32px;color:#2a8891;transform:scaleX(0.780);transform-origin:0 0;">SUPPORT BRACKET LONG</div>
<div class="a " style="left:626.2px;top:183.5px;width:7.5px;height:292px;background:#f0f0f0"></div>
<div class="a " style="left:627.2px;top:190.6px;width:5.4px;height:75px;background:#c2c2c2"></div>
<div class="a " style="left:55.6px;top:477.2px;width:578px;height:7px;background:#f0f0f0"></div>
<div class="a " style="left:63.5px;top:477.8px;width:205px;height:5.5px;background:#c2c2c2"></div>
<div class="a " style="left:675.60px;top:108.00px;font-size:8.24px;line-height:8.24px;color:#3a3f4a;transform:scaleX(0.929);transform-origin:0 0;font-weight:bold;">Details</div>
<div class="a " style="left:663.8px;top:121.9px;width:38px;height:1.5px;background:#2e8b94"></div>
<div class="a " style="left:727.30px;top:108.00px;font-size:8.24px;line-height:8.24px;color:#5f6470;transform:scaleX(0.990);transform-origin:0 0;">Attachments (0)</div>
<div class="a " style="left:664.40px;top:132.00px;font-size:9.64px;line-height:9.64px;color:#3a3a3a;transform:scaleX(0.892);transform-origin:0 0;font-weight:bold;">Result Summary</div>
<div class="a " style="left:663.90px;top:159.00px;font-size:7.26px;line-height:7.26px;color:#5f6470;transform:scaleX(0.965);transform-origin:0 0;">Order Lines</div>
<div class="a " style="left:628.90px;top:160.00px;width:200.00px;text-align:right;font-size:7.12px;line-height:7.12px;color:#2a8891;transform:scaleX(0.950);transform-origin:100% 0;">56</div>
<div class="a " style="left:663.90px;top:174.00px;font-size:7.26px;line-height:7.26px;color:#5f6470;transform:scaleX(0.964);transform-origin:0 0;">Unscheduled Order Lines</div>
<div class="a " style="left:824.9px;top:179.58px;width:4.1px;height:1.4px;background:#7dbcc2"></div>
<div class="a " style="left:663.90px;top:189.00px;font-size:7.26px;line-height:7.26px;color:#5f6470;transform:scaleX(0.965);transform-origin:0 0;">Late Order Lines</div>
<div class="a " style="left:824.9px;top:194.66px;width:4.1px;height:1.4px;background:#7dbcc2"></div>
<div class="a " style="left:663.90px;top:204.00px;font-size:7.26px;line-height:7.26px;color:#5f6470;transform:scaleX(0.965);transform-origin:0 0;">Early Order Lines</div>
<div class="a " style="left:628.90px;top:205.00px;width:200.00px;text-align:right;font-size:7.12px;line-height:7.12px;color:#2a8891;transform:scaleX(0.950);transform-origin:100% 0;">56</div>
<div class="a " style="left:663.90px;top:219.00px;font-size:7.26px;line-height:7.26px;color:#5f6470;transform:scaleX(0.965);transform-origin:0 0;">On-Time Lines</div>
<div class="a " style="left:824.9px;top:224.82px;width:4.1px;height:1.4px;background:#7dbcc2"></div>
<div class="a " style="left:663.90px;top:234.00px;font-size:7.26px;line-height:7.26px;color:#5f6470;transform:scaleX(0.965);transform-origin:0 0;">Total Setup Time</div>
<div class="a " style="left:628.90px;top:235.00px;width:200.00px;text-align:right;font-size:7.12px;line-height:7.12px;color:#2a8891;transform:scaleX(0.994);transform-origin:100% 0;">1 day 38 minutes</div>
<div class="a " style="left:663.90px;top:249.00px;font-size:7.26px;line-height:7.26px;color:#5f6470;transform:scaleX(0.965);transform-origin:0 0;">Total Run Time</div>
<div class="a " style="left:628.90px;top:250.00px;width:200.00px;text-align:right;font-size:7.12px;line-height:7.12px;color:#2a8891;transform:scaleX(0.991);transform-origin:100% 0;">3 days 12 hours 6 minutes</div>
<svg class="a" style="left:0;top:0" width="900" height="506" viewBox="0 0 900 506"><circle cx="38.2" cy="40.6" r="8.7" fill="#d5eef1"/><path d="M34.3 40.4H42.2M37.7 36.9L34.3 40.4L37.7 43.9" stroke="#5c5c5c" stroke-width="0.8" fill="none"/><circle cx="402" cy="41.6" r="9.9" stroke="#55aab2" stroke-width="1" fill="none"/><path d="M397.9 45.4L398.5 43.2L405.6 36.3L407.2 37.9L400.1 44.8Z" stroke="#2f8f99" stroke-width="0.9" fill="none" stroke-linejoin="round"/><path d="M429.6 39.4V44.4H436.6V43.4" stroke="#2f8f99" stroke-width="0.9" fill="none"/><path d="M431.6 43C432.1 40.6 433.6 39.8 435.4 39.8V37.9L438.2 40.3L435.4 42.7V41.2C433.8 41.2 432.6 41.8 431.6 43Z" stroke="#2f8f99" stroke-width="0.85" fill="none" stroke-linejoin="round"/><path d="M466 37.1V45.3M461.9 41.3H470.1" stroke="#8a8f9a" stroke-width="0.85" fill="none"/><path d="M494.3 38.3H500.9M496.4 38.3V37.3H498.8V38.3M495 38.6L495.5 45.6H499.7L500.2 38.6M496.7 40V44.2M497.6 40V44.2M498.5 40V44.2" stroke="#2f8f99" stroke-width="0.85" fill="none"/><path d="M751.9 41.2L754.2 43.9L759.1 38" stroke="#7a7a7a" stroke-width="0.75" fill="none"/><path d="M800.7 37.6H805.6V45L803.15 43.6L800.7 45Z" stroke="#2f8f99" stroke-width="0.8" fill="none" stroke-linejoin="round"/><path d="M820.6 38.9H815.6V43.7H822.9V40.9M821.6 40.1L823.3 38.4" stroke="#2f8f99" stroke-width="0.8" fill="none"/><circle cx="823.1" cy="38.4" r="0.8" fill="#2f8f99"/><path d="M832.2 44.8L835.4 41.6M832.9 41.7H835.3V44.1M840.2 37.1L837 40.3M836.9 37.8V40.2H839.3" stroke="#2f8f99" stroke-width="0.85" fill="none"/><path d="M67.8 89.8V87.9L65.8 86H61.2V94.3H67.8V92.6M65.6 86.1V88.1H67.7" stroke="#3ea4ac" stroke-width="0.9" fill="none"/><path d="M63.6 91.6L65.1 93L68.3 89.7" stroke="#1f7982" stroke-width="1.1" fill="none"/><rect x="129" y="86" width="9" height="8" fill="#46a7af"/><rect x="129" y="86" width="9" height="1.4" fill="#237f88"/><rect x="134" y="88.4" width="3" height="1" fill="#fff"/><rect x="134.4" y="90.3" width="2.4" height="0.9" fill="#d8f0f2"/><rect x="134.4" y="92.1" width="2.4" height="0.9" fill="#fff"/><circle cx="188.4" cy="90.6" r="3.8" fill="#1e7c86"/><path d="M186.6 90.4L188 91.9L190.6 88.8" stroke="#fff" stroke-width="0.9" fill="none"/><circle cx="190.9" cy="87.1" r="1.1" fill="#1e7c86"/><circle cx="192.2" cy="88.2" r="0.6" fill="#4aa0a8"/><rect x="243" y="86" width="9" height="8" fill="#4aa8b0"/><rect x="243" y="86" width="9" height="1.5" fill="#237f88"/><rect x="244" y="88.2" width="7" height="5" fill="#bfe3e6"/><rect x="244.2" y="89" width="2.4" height="1.1" fill="#1b6f78"/><path d="M246.8 93L248.2 91L249.6 92.2L251.2 89.8" stroke="#1b6f78" stroke-width="0.9" fill="none"/><circle cx="835.9" cy="89.6" r="4.1" fill="#1a7a84"/><rect x="835.4" y="87.2" width="1" height="1" fill="#9fd2d6"/><rect x="835.4" y="88.7" width="1" height="3" fill="#9fd2d6"/><path d="M605.2 141.6V146.4H612.4V145.6" stroke="#2f8f99" stroke-width="0.9" fill="none"/><path d="M607.1 145.1C607.6 142.6 609.1 141.9 610.8 141.9V140.1L613.4 142.4L610.8 144.7V143.3C609.2 143.3 608.1 143.9 607.1 145.1Z" stroke="#2f8f99" stroke-width="0.85" fill="none" stroke-linejoin="round"/><path d="M622.4 140.6H629.4V146.4H622.4Z M622.4 143.4H625.6V146.4 M625.8 143.2L628.6 140.9M627.2 140.8H628.8V142.4" stroke="#2f8f99" stroke-width="0.85" fill="none"/><circle cx="668.8" cy="110.8" r="3.6" stroke="#8a8a8a" stroke-width="0.7" fill="none"/><path d="M668.8 109.9V112.8M668.8 108.6V109.2" stroke="#8a8a8a" stroke-width="0.7"/><path d="M720 108.4V113.6C720 115.2 722.9 115.2 722.9 113.6V107.9C722.9 106.6 721 106.6 721 107.9V113" stroke="#8f8f8f" stroke-width="0.8" fill="none"/><circle cx="20.5" cy="265" r="11.7" fill="#515c6f"/><path d="M22.7 260.6L18.1 265.1L22.7 269.6" stroke="#fff" stroke-width="0.9" fill="none"/><circle cx="879.4" cy="265.1" r="11.7" fill="#515c6f"/><path d="M877.2 260.6L881.8 265.1L877.2 269.6" stroke="#fff" stroke-width="0.9" fill="none"/><path d="M58.6 190.3H65.8M63.2 187.8L65.8 190.3L63.2 192.8" stroke="#707070" stroke-width="0.75" fill="none"/><path d="M627.7 188.6L629.9 185.9L632.1 188.6Z" fill="#a6a6a6"/><path d="M627.7 469.6L629.9 472.3L632.1 469.6Z" fill="#555"/><path d="M61.3 478.4L58.9 480.6L61.3 482.8Z" fill="#a6a6a6"/><path d="M629 478.4L631.4 480.6L629 482.8Z" fill="#555"/></svg></body></html>
